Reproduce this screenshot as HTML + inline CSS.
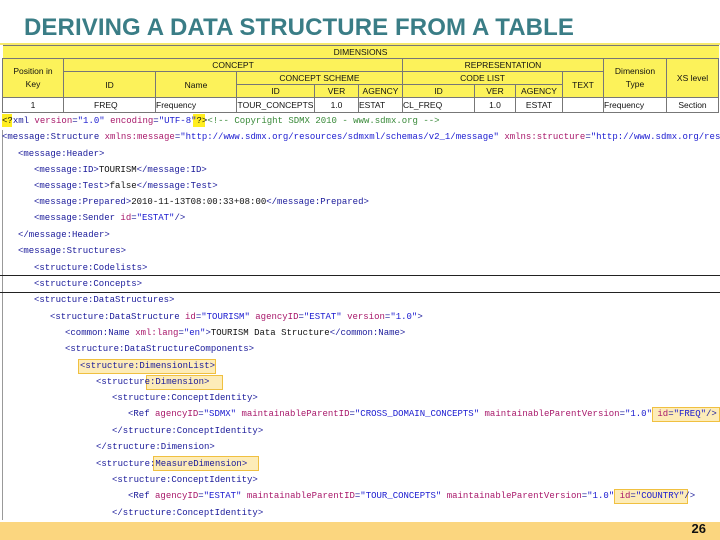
<!DOCTYPE html>
<html><head><meta charset="utf-8"><style>
body{margin:0;width:720px;height:540px;overflow:hidden;background:#fff;position:relative;font-family:"Liberation Sans",sans-serif}
.t{position:absolute;left:24px;top:14px;font-size:24px;font-weight:bold;color:#3a7d86;letter-spacing:0.1px}
.hl{position:absolute;left:0;top:43px;width:720px;height:2px;background:#f7ea6a}
table{position:absolute;left:2px;top:45px;border-collapse:collapse;font-size:8.5px;color:#111;table-layout:fixed}
td{border:1px solid #777;padding:0;text-align:center;height:12px;line-height:12px;overflow:hidden;white-space:nowrap}
.y td{background:#fcf25a}
.d td{background:#fff;height:14px}
.c{position:absolute;font-family:"Liberation Mono",monospace;font-size:9px;white-space:pre;line-height:12px;color:#1a1a9a}
.a{color:#a8186a}.v{color:#1a1ad0}.k{color:#111}.g{color:#3a8a3a}
.bx{position:absolute;background:#fdecb8;border:1px solid #f0c040}
.ln{position:absolute;left:0;width:720px;height:1px;background:#222}
.foot{position:absolute;left:0;top:522px;width:720px;height:18px;background:#fbd67f}
.num{position:absolute;right:14px;top:521px;font-size:13px;font-weight:bold;color:#111}
.gl{position:absolute;left:2px;width:1px;background:#999}
</style></head><body>
<div class="t">DERIVING A DATA STRUCTURE FROM A TABLE</div>
<div class="hl"></div>
<table>
<colgroup><col style="width:61px"><col style="width:92px"><col style="width:81px"><col style="width:78px"><col style="width:44px"><col style="width:44px"><col style="width:72px"><col style="width:41px"><col style="width:47px"><col style="width:41px"><col style="width:63px"><col style="width:52px"></colgroup>
<tr class="y"><td colspan="12" style="border-left:none;border-right:none">DIMENSIONS</td></tr>
<tr class="y"><td rowspan="3" style="line-height:13px">Position in<br>Key</td><td colspan="5">CONCEPT</td><td colspan="4">REPRESENTATION</td><td rowspan="3" style="line-height:13px">Dimension<br>Type</td><td rowspan="3">XS level</td></tr>
<tr class="y"><td rowspan="2">ID</td><td rowspan="2">Name</td><td colspan="3">CONCEPT SCHEME</td><td colspan="3">CODE LIST</td><td rowspan="2">TEXT</td></tr>
<tr class="y"><td>ID</td><td>VER</td><td>AGENCY</td><td>ID</td><td>VER</td><td>AGENCY</td></tr>
<tr class="d"><td>1</td><td style="text-align:left;padding-left:30px">FREQ</td><td style="text-align:left">Frequency</td><td>TOUR_CONCEPTS</td><td>1.0</td><td style="text-align:left">ESTAT</td><td style="text-align:left">CL_FREQ</td><td>1.0</td><td>ESTAT</td><td></td><td style="text-align:left">Frequency</td><td>Section</td></tr>
</table>
<div class="gl" style="top:130px;height:390px"></div>
<div class="ln" style="top:275px"></div>
<div class="ln" style="top:292px"></div>
<div class="bx" style="left:78px;top:359px;width:136px;height:13px"></div>
<div class="bx" style="left:146px;top:375px;width:75px;height:13px"></div>
<div class="bx" style="left:652px;top:407px;width:66px;height:13px"></div>
<div class="bx" style="left:153px;top:456px;width:104px;height:13px"></div>
<div class="bx" style="left:614px;top:489px;width:72px;height:13px"></div>
<div class="bx" style="left:2px;top:114px;width:10px;height:13px;background:#ffee20;border:none"></div>
<div class="bx" style="left:193px;top:114px;width:12px;height:13px;background:#ffee20;border:none"></div>
<div class="c" style="left:2px;top:115px"><span class="k">&lt;?</span>xml <span class="a">version</span>=<span class="v">"1.0"</span> <span class="a">encoding</span>=<span class="v">"UTF-8"</span><span class="k">?&gt;</span><span class="g">&lt;!-- Copyright SDMX 2010 - www.sdmx.org --&gt;</span></div>
<div class="c" style="left:2px;top:131px">&lt;message:Structure <span class="a">xmlns:message</span>=<span class="v">"http://www.sdmx.org/resources/sdmxml/schemas/v2_1/message"</span> <span class="a">xmlns:structure</span>=<span class="v">"http://www.sdmx.org/resour</span></div>
<div class="c" style="left:18px;top:148px">&lt;message:Header&gt;</div>
<div class="c" style="left:34px;top:164px">&lt;message:ID&gt;<span class="k">TOURISM</span>&lt;/message:ID&gt;</div>
<div class="c" style="left:34px;top:180px">&lt;message:Test&gt;<span class="k">false</span>&lt;/message:Test&gt;</div>
<div class="c" style="left:34px;top:196px">&lt;message:Prepared&gt;<span class="k">2010-11-13T08:00:33+08:00</span>&lt;/message:Prepared&gt;</div>
<div class="c" style="left:34px;top:212px">&lt;message:Sender <span class="a">id</span>=<span class="v">"ESTAT"</span>/&gt;</div>
<div class="c" style="left:18px;top:229px">&lt;/message:Header&gt;</div>
<div class="c" style="left:18px;top:245px">&lt;message:Structures&gt;</div>
<div class="c" style="left:34px;top:262px">&lt;structure:Codelists&gt;</div>
<div class="c" style="left:34px;top:278px">&lt;structure:Concepts&gt;</div>
<div class="c" style="left:34px;top:294px">&lt;structure:DataStructures&gt;</div>
<div class="c" style="left:50px;top:311px">&lt;structure:DataStructure <span class="a">id</span>=<span class="v">"TOURISM"</span> <span class="a">agencyID</span>=<span class="v">"ESTAT"</span> <span class="a">version</span>=<span class="v">"1.0"</span>&gt;</div>
<div class="c" style="left:65px;top:327px">&lt;common:Name <span class="a">xml:lang</span>=<span class="v">"en"</span>&gt;<span class="k">TOURISM Data Structure</span>&lt;/common:Name&gt;</div>
<div class="c" style="left:65px;top:343px">&lt;structure:DataStructureComponents&gt;</div>
<div class="c" style="left:80px;top:360px">&lt;structure:DimensionList&gt;</div>
<div class="c" style="left:96px;top:376px">&lt;structure:Dimension&gt;</div>
<div class="c" style="left:112px;top:392px">&lt;structure:ConceptIdentity&gt;</div>
<div class="c" style="left:128px;top:408px">&lt;Ref <span class="a">agencyID</span>=<span class="v">"SDMX"</span> <span class="a">maintainableParentID</span>=<span class="v">"CROSS_DOMAIN_CONCEPTS"</span> <span class="a">maintainableParentVersion</span>=<span class="v">"1.0"</span> <span class="a">id</span>=<span class="v">"FREQ"</span>/&gt;</div>
<div class="c" style="left:112px;top:425px">&lt;/structure:ConceptIdentity&gt;</div>
<div class="c" style="left:96px;top:441px">&lt;/structure:Dimension&gt;</div>
<div class="c" style="left:96px;top:458px">&lt;structure:MeasureDimension&gt;</div>
<div class="c" style="left:112px;top:474px">&lt;structure:ConceptIdentity&gt;</div>
<div class="c" style="left:128px;top:490px">&lt;Ref <span class="a">agencyID</span>=<span class="v">"ESTAT"</span> <span class="a">maintainableParentID</span>=<span class="v">"TOUR_CONCEPTS"</span> <span class="a">maintainableParentVersion</span>=<span class="v">"1.0"</span> <span class="a">id</span>=<span class="v">"COUNTRY"</span>/&gt;</div>
<div class="c" style="left:112px;top:507px">&lt;/structure:ConceptIdentity&gt;</div>
<div class="foot"></div>
<div class="num">26</div>
</body></html>
